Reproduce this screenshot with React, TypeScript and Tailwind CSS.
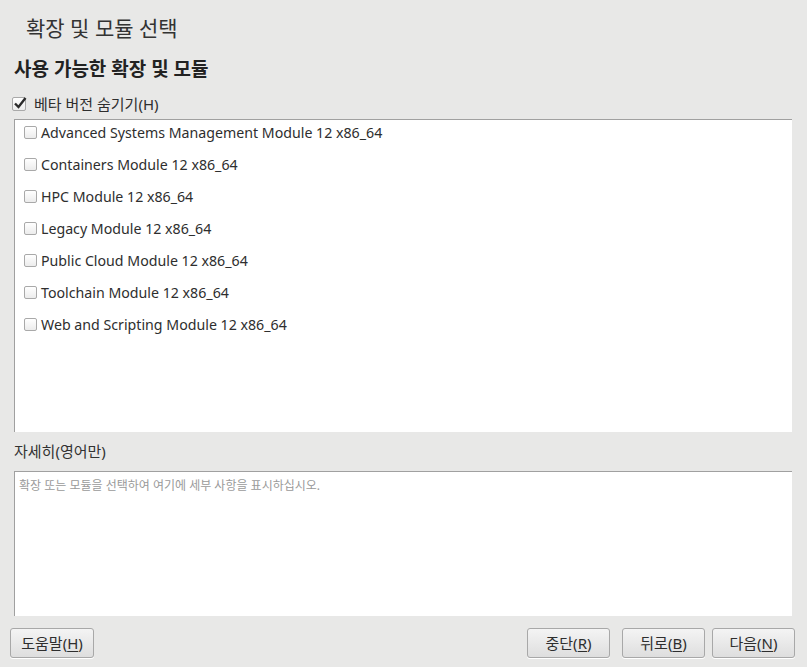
import React from "react";

const modules = [
  "Advanced Systems Management Module 12 x86_64",
  "Containers Module 12 x86_64",
  "HPC Module 12 x86_64",
  "Legacy Module 12 x86_64",
  "Public Cloud Module 12 x86_64",
  "Toolchain Module 12 x86_64",
  "Web and Scripting Module 12 x86_64",
];

const font = { fontFamily: '"Noto Sans", "Noto Sans CJK KR", sans-serif' };

const Box = ({ checked }: { checked?: boolean }) => (
  <span className={`relative inline-block ${checked ? "w-[14px] h-[14px]" : "w-[13px] h-[13px]"} border border-[#a9a9a9] rounded-[2px] bg-gradient-to-b from-white to-[#ececec] shrink-0`}>
    {checked && (
      <svg className="absolute -left-[1px] -top-[3px]" width="16" height="16" viewBox="0 0 16 16">
        <path d="M3 8.5 L6.5 12 L13.5 3" fill="none" stroke="#2b2b2b" strokeWidth="2.4" />
      </svg>
    )}
  </span>
);

const Btn = ({ label, k, w }: { label: string; k: string; w: string }) => (
  <button className={`${w} h-[30px] border border-[#a8a8a8] rounded-[3px] bg-gradient-to-b from-[#f4f4f4] to-[#dedede] text-[15px] text-[#2e2e2e] shadow-[0_1px_0_#fff]`}>
    {label}(<span className="underline underline-offset-2">{k}</span>)
  </button>
);

const App = () => {
  const [hide, setHide] = React.useState(true);
  return (
    <main style={font} className="w-[807px] h-[667px] bg-[#e8e8e7] text-[#2e2e2e] flex flex-col overflow-hidden">
      <h1 className="pl-[26px] pt-[13px] h-[44px] text-[21px] leading-[30px] text-[#333]">확장 및 모듈 선택</h1>
      <h2 className="pl-[14px] h-[40px] text-[19px] font-bold leading-[50px] text-[#222]">사용 가능한 확장 및 모듈</h2>
      <label className="flex items-center gap-[8px] pl-[12px] pt-[6px] h-[34px] text-[15px]" onClick={() => setHide(!hide)}>
        <Box checked={hide} />
        <span>베타 버전 숨기기(H)</span>
      </label>
      <div className="ml-[14px] w-[778px] h-[314px] mt-[1px] bg-white border-l border-t border-[#a0a0a0]">
        <div className="-mt-[3px]">
          {modules.map((m) => (
            <div key={m} className="flex items-center gap-[4px] pl-[9px] h-[32px] text-[14.2px]">
              <Box />
              <span>{m}</span>
            </div>
          ))}
        </div>
      </div>
      <div className="pl-[14px] h-[39px] pt-[1px] flex items-center text-[15px] text-[#333]">자세히(영어만)</div>
      <div className="ml-[14px] w-[778px] h-[146px] bg-white border-l border-t border-[#a0a0a0] px-[4px] pt-[5px] text-[12px] text-[#9a9a9a]">
        확장 또는 모듈을 선택하여 여기에 세부 사항을 표시하십시오.
      </div>
      <div className="flex items-center h-[51px] pt-[3px] pl-[10px] pr-[12px]">
        <Btn label="도움말" k="H" w="w-[84px]" />
        <div className="ml-auto flex">
          <Btn label="중단" k="R" w="w-[83px]" />
          <div className="w-[12px]" />
          <Btn label="뒤로" k="B" w="w-[83px]" />
          <div className="w-[7px]" />
          <Btn label="다음" k="N" w="w-[83px]" />
        </div>
      </div>
    </main>
  );
};

export default App;
